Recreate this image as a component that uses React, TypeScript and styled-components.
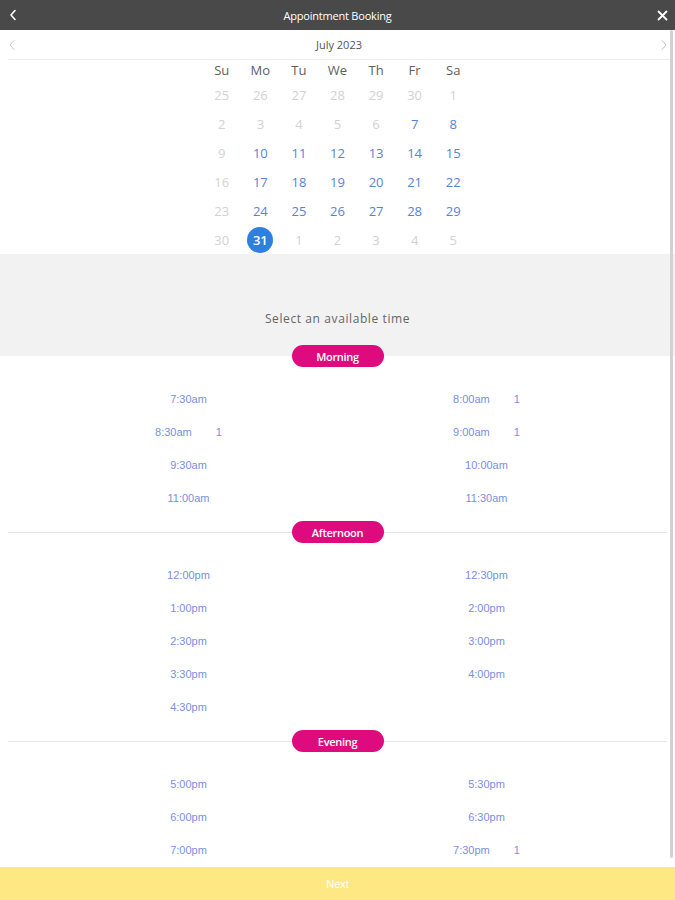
import React from "react";
import styled, {createGlobalStyle} from "styled-components";

const GlobalStyle = createGlobalStyle`
	html, body {
		margin: 0;
		padding: 0;
		background: #fff;
	}
	* {
		box-sizing: border-box;
	}
`;

const Page = styled.div`
	width: 675px;
	height: 900px;
	display: flex;
	flex-direction: column;
	overflow: hidden;
	font-family: "Open Sans", "Liberation Sans", sans-serif;
`;

const TopBar = styled.header`
	height: 30px;
	flex: none;
	background: #494949;
	color: #fff;
	display: flex;
	align-items: center;
	justify-content: space-between;
	padding: 0 6px 0 6px;
`;

const TopTitle = styled.h1`
	margin: 0;
	font-size: 11px;
	font-weight: 400;
	letter-spacing: -0.2px;
`;

const IconButton = styled.button`
	width: 14px;
	height: 20px;
	padding: 0;
	border: 0;
	background: none;
	color: inherit;
	display: flex;
	align-items: center;
	justify-content: center;
`;

const Scroller = styled.main`
	flex: 1;
	position: relative;
	overflow: hidden;
`;

const ScrollThumb = styled.div`
	position: absolute;
	top: 0;
	right: 2px;
	width: 3px;
	height: 828px;
	border-radius: 2px;
	background: #d2d2d2;
`;

const MonthBar = styled.div`
	height: 30px;
	margin: 0 5px 0 8px;
	border-bottom: 1px solid #ececec;
	display: flex;
	align-items: center;
	justify-content: space-between;
	color: #555;
	font-size: 11px;
`;

const MonthArrow = styled.span`
	width: 10px;
	display: flex;
	color: #c4c4c4;
`;

const CalGrid = styled.div`
	width: 270px;
	margin: 0 auto;
	display: grid;
	grid-template-columns: repeat(7, 1fr);
	grid-auto-rows: 29px;
	grid-template-rows: 20px;
`;

const WeekDay = styled.div`
	display: flex;
	align-items: center;
	justify-content: center;
	font-size: 13px;
	color: #606060;
`;

const Day = styled.div<{$state: "off" | "on" | "sel"}>`
	display: flex;
	align-items: center;
	justify-content: center;
	font-size: 13px;
	color: ${({$state}) => ($state === "off" ? "#d2d2d2" : $state === "on" ? "#5584d6" : "#fff")};
	span {
		width: 26px;
		height: 26px;
		border-radius: 50%;
		display: flex;
		align-items: center;
		justify-content: center;
		background: ${({$state}) => ($state === "sel" ? "#2e80df" : "transparent")};
		font-weight: ${({$state}) => ($state === "sel" ? 600 : 400)};
	}
`;

const Prompt = styled.div`
	height: 91px;
	background: #f2f2f2;
	display: flex;
	align-items: flex-end;
	justify-content: center;
	padding-bottom: 18px;
	color: #666;
	font-size: 12px;
	letter-spacing: 0.6px;
`;

const SectionHead = styled.div<{$first?: boolean}>`
	height: 22px;
	display: flex;
	align-items: center;
	padding: 0 8px;
	background: ${({$first}) => ($first ? "linear-gradient(#f2f2f2 50%, #fff 50%)" : "none")};
	&::before,
	&::after {
		content: "";
		flex: 1;
		height: 1px;
		background: ${({$first}) => ($first ? "transparent" : "#e6e6e6")};
	}
`;

const Pill = styled.div`
	width: 92px;
	height: 22px;
	border-radius: 11px;
	background: #dd0b7e;
	color: #fff;
	font-size: 11px;
	font-weight: 600;
	display: flex;
	align-items: center;
	justify-content: center;
	letter-spacing: -0.3px;
`;

const SlotGrid = styled.div`
	width: 596px;
	margin: 0 auto;
	padding: 15px 0 7px;
	display: grid;
	grid-template-columns: 1fr 1fr;
	grid-auto-rows: 33px;
`;

const Slot = styled.div`
	display: flex;
	align-items: center;
	justify-content: center;
	font-family: "Liberation Sans", Arial, sans-serif;
	font-size: 11px;
	color: #7890e0;
`;

const Count = styled.span`
	margin-left: 24px;
`;

const NextBar = styled.button`
	height: 33px;
	flex: none;
	border: 0;
	background: #fde884;
	color: #fff;
	font-family: "Liberation Sans", Arial, sans-serif;
	font-size: 11px;
`;

const Chevron: React.FC<{dir: "left" | "right"; w?: number}> = ({dir, w = 1.6}) => (
	<svg width="8" height="12" viewBox="0 0 8 12">
		<polyline
			points={dir === "left" ? "6,1.5 2,6 6,10.5" : "2,1.5 6,6 2,10.5"}
			fill="none"
			stroke="currentColor"
			strokeWidth={w}
			strokeLinecap="round"
			strokeLinejoin="round"
		/>
	</svg>
);

const CloseIcon = () => (
	<svg width="11" height="11" viewBox="0 0 11 11">
		<path d="M1.5 1.5 L9.5 9.5 M9.5 1.5 L1.5 9.5" stroke="currentColor" strokeWidth="1.8" strokeLinecap="round" />
	</svg>
);

const weekDays = ["Su", "Mo", "Tu", "We", "Th", "Fr", "Sa"];

type DayCell = {n: number; state: "off" | "on" | "sel"};

const buildDays = (): DayCell[] => {
	const cells: DayCell[] = [];
	[25, 26, 27, 28, 29, 30].forEach(n => cells.push({n, state: "off"}));
	for (let n = 1; n <= 31; n++) {
		const col = cells.length % 7;
		let state: DayCell["state"] = "on";
		if (n < 7 || (col === 0 && n < 31) || n === 30) state = "off";
		if (n === 31) state = "sel";
		cells.push({n, state});
	}
	[1, 2, 3, 4, 5].forEach(n => cells.push({n, state: "off"}));
	return cells;
};

type SlotData = {t: string; c?: number};

const sections: {name: string; slots: SlotData[]}[] = [
	{
		name: "Morning",
		slots: [
			{t: "7:30am"},
			{t: "8:00am", c: 1},
			{t: "8:30am", c: 1},
			{t: "9:00am", c: 1},
			{t: "9:30am"},
			{t: "10:00am"},
			{t: "11:00am"},
			{t: "11:30am"}
		]
	},
	{
		name: "Afternoon",
		slots: [
			{t: "12:00pm"},
			{t: "12:30pm"},
			{t: "1:00pm"},
			{t: "2:00pm"},
			{t: "2:30pm"},
			{t: "3:00pm"},
			{t: "3:30pm"},
			{t: "4:00pm"},
			{t: "4:30pm"}
		]
	},
	{
		name: "Evening",
		slots: [
			{t: "5:00pm"},
			{t: "5:30pm"},
			{t: "6:00pm"},
			{t: "6:30pm"},
			{t: "7:00pm"},
			{t: "7:30pm", c: 1}
		]
	}
];

export default function App() {
	const days = buildDays();
	return (
		<Page>
			<GlobalStyle />
			<TopBar>
				<IconButton aria-label="Back">
					<Chevron dir="left" w={1.6} />
				</IconButton>
				<TopTitle>Appointment Booking</TopTitle>
				<IconButton aria-label="Close">
					<CloseIcon />
				</IconButton>
			</TopBar>
			<Scroller>
				<MonthBar>
					<MonthArrow>
						<Chevron dir="left" w={1} />
					</MonthArrow>
					<span>July 2023</span>
					<MonthArrow>
						<Chevron dir="right" w={1} />
					</MonthArrow>
				</MonthBar>
				<CalGrid>
					{weekDays.map(d => (
						<WeekDay key={d}>{d}</WeekDay>
					))}
					{days.map((d, i) => (
						<Day key={i} $state={d.state}>
							<span>{d.n}</span>
						</Day>
					))}
				</CalGrid>
				<Prompt>Select an available time</Prompt>
				{sections.map((s, i) => (
					<section key={s.name}>
						<SectionHead $first={i === 0}>
							<Pill>{s.name}</Pill>
						</SectionHead>
						<SlotGrid>
							{s.slots.map(slot => (
								<Slot key={slot.t}>
									{slot.t}
									{slot.c ? <Count>{slot.c}</Count> : null}
								</Slot>
							))}
						</SlotGrid>
					</section>
				))}
				<ScrollThumb />
			</Scroller>
			<NextBar>Next</NextBar>
		</Page>
	);
}
